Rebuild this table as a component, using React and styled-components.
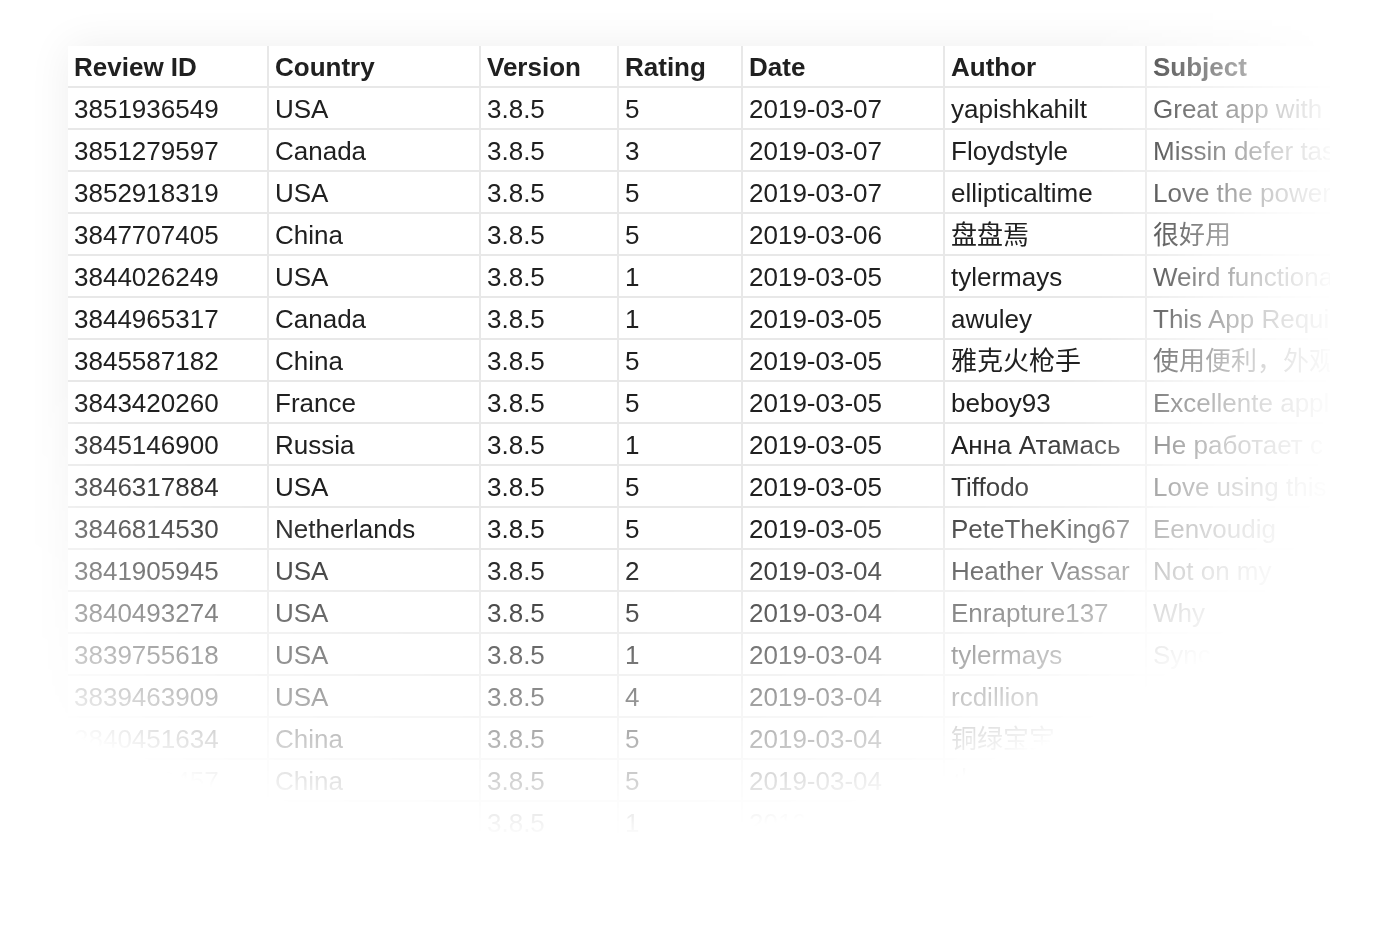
import React from "react";
import styled, { createGlobalStyle } from "styled-components";

const GlobalStyle = createGlobalStyle`
  html, body {
    margin: 0;
    padding: 0;
    background: #ffffff;
  }
  body {
    font-family: "Liberation Sans", Arial, "Noto Sans CJK SC", sans-serif;
  }
`;

const columns = [
  { title: "Review ID", width: 200 },
  { title: "Country", width: 212 },
  { title: "Version", width: 138 },
  { title: "Rating", width: 124 },
  { title: "Date", width: 202 },
  { title: "Author", width: 202 },
  { title: "Subject", width: 184 },
];

const tableWidth = columns.reduce((sum, c) => sum + c.width, 0);

const reviews = [
  ["3851936549", "USA", "3.8.5", "5", "2019-03-07", "yapishkahilt", "Great app with"],
  ["3851279597", "Canada", "3.8.5", "3", "2019-03-07", "Floydstyle", "Missin defer tasks"],
  ["3852918319", "USA", "3.8.5", "5", "2019-03-07", "ellipticaltime", "Love the power"],
  ["3847707405", "China", "3.8.5", "5", "2019-03-06", "盘盘焉", "很好用"],
  ["3844026249", "USA", "3.8.5", "1", "2019-03-05", "tylermays", "Weird functionality"],
  ["3844965317", "Canada", "3.8.5", "1", "2019-03-05", "awuley", "This App Requires"],
  ["3845587182", "China", "3.8.5", "5", "2019-03-05", "雅克火枪手", "使用便利，外观"],
  ["3843420260", "France", "3.8.5", "5", "2019-03-05", "beboy93", "Excellente appli"],
  ["3845146900", "Russia", "3.8.5", "1", "2019-03-05", "Анна Атамась", "Не работает с"],
  ["3846317884", "USA", "3.8.5", "5", "2019-03-05", "Tiffodo", "Love using this"],
  ["3846814530", "Netherlands", "3.8.5", "5", "2019-03-05", "PeteTheKing67", "Eenvoudig"],
  ["3841905945", "USA", "3.8.5", "2", "2019-03-04", "Heather Vassar", "Not on my"],
  ["3840493274", "USA", "3.8.5", "5", "2019-03-04", "Enrapture137", "Why"],
  ["3839755618", "USA", "3.8.5", "1", "2019-03-04", "tylermays", "Sync"],
  ["3839463909", "USA", "3.8.5", "4", "2019-03-04", "rcdillion", "Good"],
  ["3840451634", "China", "3.8.5", "5", "2019-03-04", "铜绿宝宝", "好"],
  ["3839120457", "China", "3.8.5", "5", "2019-03-04", "小鱼", "好"],
  ["3838812396", "USA", "3.8.5", "1", "2019-03-03", "jdoe", "Bad"],
];

const Page = styled.div`
  width: 1396px;
  height: 936px;
  box-sizing: border-box;
  padding: 46px 0 0 68px;
  overflow: hidden;
  -webkit-mask-image: radial-gradient(
      ellipse 1030px 840px at 570px 0px,
      #000 66%,
      transparent 100%
    ),
    linear-gradient(to right, #000 1085px, transparent 1340px);
  mask-image: radial-gradient(
      ellipse 1030px 840px at 570px 0px,
      #000 66%,
      transparent 100%
    ),
    linear-gradient(to right, #000 1085px, transparent 1340px);
  -webkit-mask-composite: source-in;
  mask-composite: intersect;
`;

const Table = styled.table`
  width: ${(p) => p.$w}px;
  border-collapse: collapse;
  table-layout: fixed;
  background: #ffffff;
  box-shadow: 0 0 40px rgba(0, 0, 0, 0.07);
  color: #202020;
  font-size: 26px;
  line-height: 38px;
`;

const HeadCell = styled.th`
  width: ${(p) => p.$w}px;
  box-sizing: border-box;
  padding: 2px 6px 0;
  text-align: left;
  font-weight: 700;
  white-space: nowrap;
  overflow: hidden;
  border: 2px solid #e8e8e8;
  border-top: none;
  &:first-child {
    border-left: none;
  }
  &:last-child {
    border-right: none;
  }
`;

const Cell = styled.td`
  box-sizing: border-box;
  padding: 2px 6px 0;
  white-space: nowrap;
  overflow: hidden;
  border: 2px solid #e8e8e8;
  &:first-child {
    border-left: none;
  }
  &:last-child {
    border-right: none;
  }
`;

export default function App() {
  return (
    <>
      <GlobalStyle />
      <Page>
        <Table $w={tableWidth}>
          <thead>
            <tr>
              {columns.map((c) => (
                <HeadCell key={c.title} $w={c.width}>
                  {c.title}
                </HeadCell>
              ))}
            </tr>
          </thead>
          <tbody>
            {reviews.map((row) => (
              <tr key={row[0]}>
                {row.map((value, i) => (
                  <Cell key={i}>{value}</Cell>
                ))}
              </tr>
            ))}
          </tbody>
        </Table>
      </Page>
    </>
  );
}
